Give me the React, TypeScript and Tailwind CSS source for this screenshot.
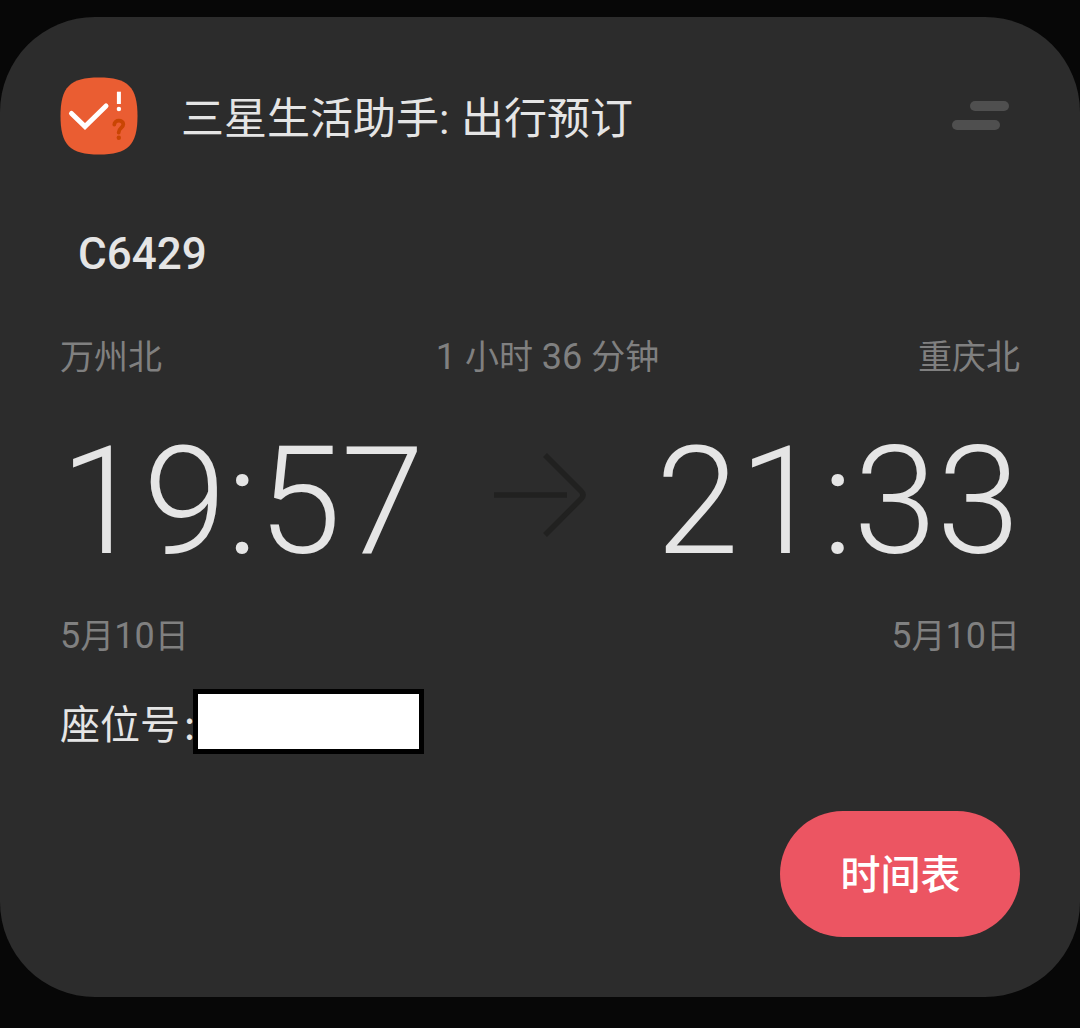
import React from "react";

function StopDate() {
  return (
    <span>
      <span className="text-[36px]">5</span>月<span className="text-[36px]">10</span>日
    </span>
  );
}

export default function App() {
  return (
    <div className="h-[1028px] w-[1080px] overflow-hidden bg-[#070707] pt-[17px] font-['Roboto','Noto_Sans_CJK_SC',sans-serif]">
      <main className="flex h-[980px] w-full flex-col rounded-[95px] bg-[#2c2c2c] px-[60px] pt-[60px] text-[#e5e5e5]">
        <header className="flex h-[78px] items-center">
          <svg width="78" height="78" viewBox="0 0 78 78">
            <path d="M39 .5C68 .5 77.500 10 77.500 39S68 77.500 39 77.500.5 68 .5 39 10 .5 39 .5Z" fill="#ea5d32" />
            <path d="M11.500 36.500 25 49.500 46 29" fill="none" stroke="#fff" strokeWidth="5" strokeLinecap="round" />
            <path d="M58.900 14.700v12.300" stroke="#fff" strokeWidth="4" />
            <circle cx="58.900" cy="32" r="2.200" fill="#fff" />
            <path d="M54.300 47.500c0-5 9-5 9-.2 0 3.700-4.600 3.700-4.600 8.200" fill="none" stroke="#c94503" strokeWidth="3.800" strokeLinecap="round" />
            <circle cx="58.800" cy="60.700" r="2.200" fill="#c94503" />
          </svg>
          <h1 className="mt-[6px] ml-[43px] text-[43px] leading-[60px] whitespace-nowrap">
            三星生活助手:<span className="ml-[1px]"> 出行预订</span>
          </h1>
          <svg className="mr-[11px] ml-auto" width="57" height="30" viewBox="0 0 57 30">
            <rect x="18" width="39" height="10" rx="5" fill="#4f4f4f" />
            <rect y="19" width="48" height="10" rx="5" fill="#4f4f4f" />
          </svg>
        </header>
        <h2 className="mt-[69px] ml-[18px] h-[60px] text-[44px] leading-[60px] font-medium">C6429</h2>
        <div className="mt-[43px] flex h-[60px] items-center justify-between text-[34px] whitespace-nowrap text-[#808080]">
          <span>万州北</span>
          <span className="ml-[15px]">
            <span className="text-[36px]">1 </span>小时<span className="text-[36px]"> 36 </span>分钟
          </span>
          <span>重庆北</span>
        </div>
        <div className="mt-[18px] flex h-[180px] items-center justify-between text-[150px] leading-[180px] font-light">
          <span className="mt-[14px]">19:57</span>
          <svg className="mr-px" width="92" height="84" viewBox="0 0 92 84" fill="none" stroke="#212120" strokeWidth="5.500">
            <path d="M0 42h73M51 2l36 36q4 4 0 8L51 82" />
          </svg>
          <span className="mt-[14px]">21:33</span>
        </div>
        <div className="mt-[21px] flex h-[60px] items-center justify-between text-[34px] text-[#808080]">
          <StopDate />
          <StopDate />
        </div>
        <div className="mt-[22px] flex h-[66px] items-center text-[40px]">
          <span className="mt-[10px] flex w-[133px] whitespace-nowrap">
            座位号<span className="-mt-[4px] ml-[4px] font-['Noto_Sans_CJK_SC']">:</span>
          </span>
          <span className="relative h-[65px] w-[231px] shrink-0 border-[5px] border-black bg-white" />
        </div>
        <button className="mt-[57px] ml-auto h-[126px] w-[240px] rounded-full bg-[#ec5562] pt-[4px] pl-[1px] text-[40px] font-medium text-white">时间表</button>
      </main>
    </div>
  );
}
